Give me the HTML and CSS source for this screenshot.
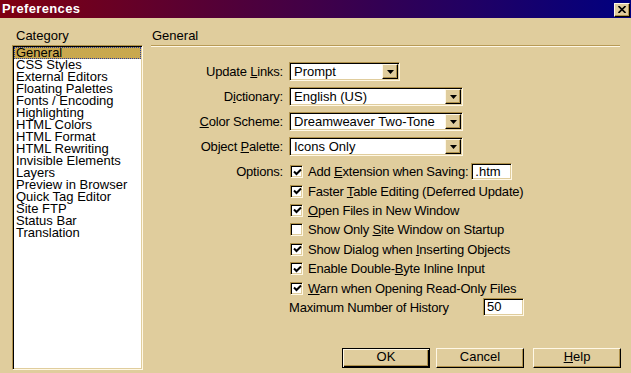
FILE: index.html
```html
<!DOCTYPE html>
<html>
<head>
<meta charset="utf-8">
<link rel="stylesheet" href="styles.css">
</head>
<body>
<div class="dialog">
  <div class="titlebar">
    <span class="title">Preferences</span>
    <span class="close"><svg width="8" height="7" viewBox="0 0 8 7"><path d="M0.5 0 L7.5 7 M7.5 0 L0.5 7" stroke="#000" stroke-width="1.6" fill="none"/></svg></span>
  </div>
  <div class="body">
    <div class="cat">
      <div class="cat-label">Category</div>
      <ul class="list">
        <li class="sel">General</li>
        <li>CSS Styles</li>
        <li>External Editors</li>
        <li>Floating Palettes</li>
        <li>Fonts / Encoding</li>
        <li>Highlighting</li>
        <li>HTML Colors</li>
        <li>HTML Format</li>
        <li>HTML Rewriting</li>
        <li>Invisible Elements</li>
        <li>Layers</li>
        <li>Preview in Browser</li>
        <li>Quick Tag Editor</li>
        <li>Site FTP</li>
        <li>Status Bar</li>
        <li>Translation</li>
      </ul>
    </div>
    <div class="panel">
      <div class="panel-head">General</div>
      <div class="form">
        <div class="lbl">Update <u>L</u>inks:</div>
        <div class="select short"><span class="val">Prompt</span><span class="arrow"><svg width="7" height="4" viewBox="0 0 7 4"><path d="M0 0 H7 L3.5 4 Z" fill="#000"/></svg></span></div>
        <div class="lbl">D<u>i</u>ctionary:</div>
        <div class="select"><span class="val">English (US)</span><span class="arrow"><svg width="7" height="4" viewBox="0 0 7 4"><path d="M0 0 H7 L3.5 4 Z" fill="#000"/></svg></span></div>
        <div class="lbl"><u>C</u>olor Scheme:</div>
        <div class="select"><span class="val">Dreamweaver Two-Tone</span><span class="arrow"><svg width="7" height="4" viewBox="0 0 7 4"><path d="M0 0 H7 L3.5 4 Z" fill="#000"/></svg></span></div>
        <div class="lbl">Object <u>P</u>alette:</div>
        <div class="select"><span class="val">Icons Only</span><span class="arrow"><svg width="7" height="4" viewBox="0 0 7 4"><path d="M0 0 H7 L3.5 4 Z" fill="#000"/></svg></span></div>
        <div class="lbl opt-lbl">Options:</div>
        <div class="opts">
          <div class="opt"><span class="cb on"><svg width="9" height="9" viewBox="0 0 9 9"><path d="M1 3.5 L3.5 6 L8 1.5" stroke="#000" stroke-width="2" fill="none"/></svg></span><span>Add <u>E</u>xtension when Saving:</span><span class="field ext">.htm</span></div>
          <div class="opt"><span class="cb on"><svg width="9" height="9" viewBox="0 0 9 9"><path d="M1 3.5 L3.5 6 L8 1.5" stroke="#000" stroke-width="2" fill="none"/></svg></span><span>Faster <u>T</u>able Editing (Deferred Update)</span></div>
          <div class="opt"><span class="cb on"><svg width="9" height="9" viewBox="0 0 9 9"><path d="M1 3.5 L3.5 6 L8 1.5" stroke="#000" stroke-width="2" fill="none"/></svg></span><span><u>O</u>pen Files in New Window</span></div>
          <div class="opt"><span class="cb"></span><span>Show Only <u>S</u>ite Window on Startup</span></div>
          <div class="opt"><span class="cb on"><svg width="9" height="9" viewBox="0 0 9 9"><path d="M1 3.5 L3.5 6 L8 1.5" stroke="#000" stroke-width="2" fill="none"/></svg></span><span>Show Dialog when <u>I</u>nserting Objects</span></div>
          <div class="opt"><span class="cb on"><svg width="9" height="9" viewBox="0 0 9 9"><path d="M1 3.5 L3.5 6 L8 1.5" stroke="#000" stroke-width="2" fill="none"/></svg></span><span>Enable Double-<u>B</u>yte Inline Input</span></div>
          <div class="opt"><span class="cb on"><svg width="9" height="9" viewBox="0 0 9 9"><path d="M1 3.5 L3.5 6 L8 1.5" stroke="#000" stroke-width="2" fill="none"/></svg></span><span><u>W</u>arn when Opening Read-Only Files</span></div>
          <div class="opt hist"><span>Maximum Number of History</span><span class="field num">50</span></div>
        </div>
      </div>
      <div class="buttons">
        <span class="btn default">OK</span>
        <span class="btn">Cancel</span>
        <span class="btn help"><u>H</u>elp</span>
      </div>
    </div>
  </div>
</div>
</body>
</html>
```

FILE: styles.css
```css
* { box-sizing: border-box; }
html, body { margin: 0; padding: 0; }
body {
  width: 631px;
  height: 373px;
  overflow: hidden;
  font-family: "Liberation Sans", Arial, sans-serif;
  font-size: 13px;
  color: #000;
}
.dialog {
  width: 631px;
  height: 373px;
  background: #e0cd9d;
  display: flex;
  flex-direction: column;
}
.titlebar {
  height: 18px;
  flex: none;
  display: flex;
  align-items: center;
  justify-content: space-between;
  padding: 0 1px 0 2px;
  background: linear-gradient(to right, #800010, #000080);
}
.title {
  color: #fff;
  font-weight: bold;
  font-size: 13px;
  letter-spacing: 0.35px;
  line-height: 18px;
}
.close {
  width: 16px;
  height: 14px;
  margin-top: 1px;
  background: #e0cd9d;
  border: 1px solid;
  border-color: #fff8e6 #000 #000 #fff8e6;
  box-shadow: inset -1px -1px #b0924c;
  display: flex;
  align-items: center;
  justify-content: center;
}
.body {
  flex: 1;
  display: grid;
  grid-template-columns: 131px 1fr;
  column-gap: 8px;
  padding: 10px 11px 3px 12px;
  min-height: 0;
}
.cat {
  display: flex;
  flex-direction: column;
  min-height: 0;
}
.cat-label {
  height: 15px;
  line-height: 15px;
  padding-left: 4px;
  margin-bottom: 2px;
}
.list {
  flex: 1;
  list-style: none;
  margin: 0;
  background: #fff;
  border: 1px solid;
  border-color: #b0924c #fff8e6 #fff8e6 #b0924c;
  box-shadow: inset 1px 1px #000, inset -1px -1px #e0cd9d;
  padding: 1px;
}
.list li {
  height: 12px;
  line-height: 12px;
  padding-left: 2px;
  white-space: nowrap;
}
.list li.sel {
  background: #c9a84e;
  outline: 1px dotted #2a3ea0;
  outline-offset: -1px;
}
.panel {
  display: flex;
  flex-direction: column;
  min-width: 0;
}
.panel-head {
  height: 18px;
  line-height: 15px;
  padding-left: 1px;
  border-bottom: 1px solid #b89a56;
  box-shadow: 0 1px 0 #fff8e6;
}
.form {
  margin-top: 16px;
  display: grid;
  grid-template-columns: 132px 1fr;
  column-gap: 6px;
  row-gap: 6px;
  align-items: center;
  letter-spacing: -0.2px;
}
.lbl {
  text-align: right;
  line-height: 19px;
  white-space: nowrap;
}
.opt-lbl {
  align-self: start;
  line-height: 19.4px;
}
.select {
  width: 174px;
  height: 19px;
  background: #fff;
  border: 1px solid;
  border-color: #b0924c #fff8e6 #fff8e6 #b0924c;
  box-shadow: inset 1px 1px #000, inset -1px -1px #e0cd9d;
  padding: 1px;
  display: flex;
  align-items: stretch;
  letter-spacing: 0;
}
.select.short { width: 111px; }
.val {
  flex: 1;
  padding-left: 3px;
  line-height: 15px;
  white-space: nowrap;
}
.arrow {
  width: 16px;
  flex: none;
  background: #e0cd9d;
  border: 1px solid;
  border-color: #fff8e6 #000 #000 #fff8e6;
  box-shadow: inset -1px -1px #b0924c;
  display: flex;
  align-items: center;
  justify-content: center;
}
.opts {
  display: flex;
  flex-direction: column;
}
.opt {
  height: 19.4px;
  display: flex;
  align-items: center;
  white-space: nowrap;
  padding-left: 1px;
}
.cb {
  width: 13px;
  height: 13px;
  flex: none;
  margin-right: 5px;
  background: #fff;
  border: 1px solid;
  border-color: #b0924c #fff8e6 #fff8e6 #b0924c;
  box-shadow: inset 1px 1px #000, inset -1px -1px #e0cd9d;
  display: flex;
  align-items: center;
  justify-content: center;
}
.cb svg { margin: 1px 0 0 1px; }
.field {
  background: #fff;
  border: 1px solid;
  border-color: #b0924c #fff8e6 #fff8e6 #b0924c;
  box-shadow: inset 1px 1px #000, inset -1px -1px #e0cd9d;
  padding-left: 3px;
  white-space: nowrap;
  letter-spacing: 0;
}
.ext {
  width: 41px;
  height: 17px;
  line-height: 15px;
  margin-left: 3px;
}
.hist {
  display: grid;
  grid-template-columns: 194px 41px;
  align-items: center;
  padding-left: 0;
}
.num {
  height: 18px;
  line-height: 16px;
}
.buttons {
  margin-top: auto;
  margin-bottom: 2px;
  margin-right: -1px;
  display: flex;
  justify-content: flex-end;
}
.btn {
  width: 88px;
  height: 20px;
  line-height: 16px;
  text-align: center;
  background: #e0cd9d;
  border: 1px solid;
  border-color: #fff8e6 #000 #000 #fff8e6;
  box-shadow: inset -1px -1px #b0924c;
  margin-left: 6px;
}
.btn.help { margin-left: 9px; }
.btn.default {
  border: 1px solid #000;
  box-shadow: inset 1px 1px #fff8e6, inset -1px -1px #000, inset -2px -2px #b0924c;
}
```
